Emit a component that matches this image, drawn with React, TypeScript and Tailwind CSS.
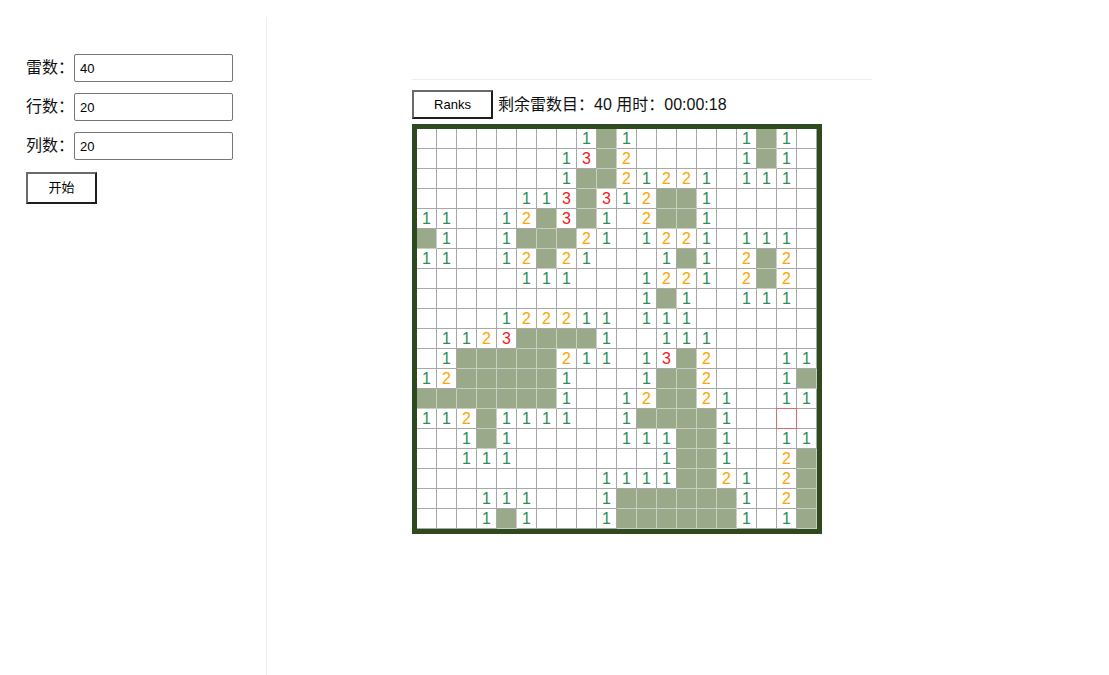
import React from 'react';

// '.' revealed empty, '#' covered, digits = neighbour count, 'r' = hovered cell
const BOARD = [
  '........1#1.....1#1.',
  '.......13#2.....1#1.',
  '.......1##21221.111.',
  '.....113#312##1.....',
  '11..12#3#1.2##1.....',
  '#1..1###21.1221.111.',
  '11..12#21...1#1.2#2.',
  '.....111...1221.2#2.',
  '...........1#1..111.',
  '....122211.111......',
  '.1123####1..111.....',
  '.1#####211.13#2...11',
  '12#####1...1##2...1#',
  '#######1..12##21..11',
  '112#1111..1####1..r.',
  '..1#1.....111##1..11',
  '..111.......1##1..2#',
  '.........1111##21.2#',
  '...111...1######1.2#',
  '...1#1...1######1.1#',
];

const numColor: Record<string, string> = {
  '1': 'text-[#2e8b57]',
  '2': 'text-[#ffa500]',
  '3': 'text-[#f01c1c]',
};

function Cell({ v }: { v: string }) {
  if (v === '#') {
    return <div className="w-[20px] h-[20px] bg-[#9aa98a] border-r border-b border-[#c9cfc1]" />;
  }
  if (v === 'r') {
    return (
      <div className="relative w-[20px] h-[20px] bg-white border-r border-b border-[#a8a8a8]">
        <div className="absolute -left-px -top-px w-[21px] h-[21px] border border-[#e06a6a]" />
      </div>
    );
  }
  return (
    <div className={`w-[20px] h-[20px] bg-white border-r border-b border-[#a8a8a8] flex items-center justify-center text-[16px] leading-none ${numColor[v] ?? ''}`}>
      {v === '.' ? '' : v}
    </div>
  );
}

function Field({ label, value }: { label: string; value: string }) {
  return (
    <div className="flex items-center">
      <span className="w-[48px] text-[16px] text-[#111]">{label}</span>
      <input
        readOnly
        value={value}
        className="w-[159px] h-[28px] border border-[#767676] rounded-[2px] px-[5px] text-[13px] text-black outline-none"
      />
    </div>
  );
}

const btn =
  'bg-white border-2 border-t-[#6a6a6a] border-l-[#6a6a6a] border-r-[#1e1e1e] border-b-[#1e1e1e] text-[13px] text-black flex items-center justify-center';

export default function App() {
  return (
    <div className="flex h-screen bg-white font-['Liberation_Sans','Noto_Sans_CJK_SC',sans-serif]">
      <aside className="w-[267px] mt-[18px] border-r border-[#eeeeee] pt-[36px] pl-[26px] flex flex-col gap-[11px]">
        <Field label="雷数：" value="40" />
        <Field label="行数：" value="20" />
        <Field label="列数：" value="20" />
        <button className={`${btn} w-[71px] h-[32px] mt-px`}>开始</button>
      </aside>

      <main className="pl-[145px] pt-[79px]">
        <div className="w-[460px] border-t border-[#eeeeee]" />
        <div className="mt-[10px] flex items-center gap-[5px]">
          <button className={`${btn} w-[81px] h-[29px]`}>Ranks</button>
          <span className="text-[16px] text-[#111]">剩余雷数目：40 用时：00:00:18</span>
        </div>
        <div className="mt-[5px] w-[410px] border-[5px] border-[#2f4a1e]">
          <div className="grid grid-cols-[repeat(20,20px)]">
            {BOARD.flatMap((row, r) =>
              row.split('').map((v, c) => <Cell key={`${r}-${c}`} v={v} />)
            )}
          </div>
        </div>
      </main>
    </div>
  );
}
